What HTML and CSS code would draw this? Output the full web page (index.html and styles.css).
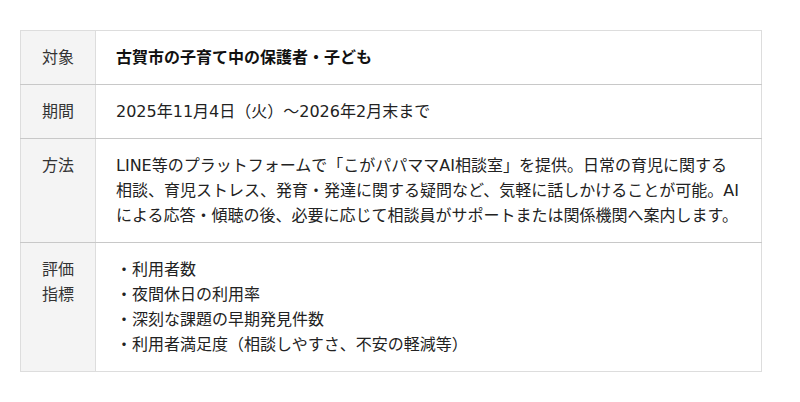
FILE: index.html
```html
<!DOCTYPE html>
<html lang="ja">
<head>
<meta charset="utf-8">
<link rel="stylesheet" href="styles.css">
</head>
<body>
<div class="wrap">
<table class="info">
  <tr>
    <th>対象</th>
    <td class="strong">古賀市の子育て中の保護者・子ども</td>
  </tr>
  <tr>
    <th>期間</th>
    <td>2025年11月4日（火）～2026年2月末まで</td>
  </tr>
  <tr>
    <th>方法</th>
    <td>LINE等のプラットフォームで「こがパパママAI相談室」を提供。日常の育児に関する相談、育児ストレス、発育・発達に関する疑問など、気軽に話しかけることが可能。AIによる応答・傾聴の後、必要に応じて相談員がサポートまたは関係機関へ案内します。</td>
  </tr>
  <tr>
    <th>評価<br>指標</th>
    <td>
      <ul class="list">
        <li>・利用者数</li>
        <li>・夜間休日の利用率</li>
        <li>・深刻な課題の早期発見件数</li>
        <li>・利用者満足度（相談しやすさ、不安の軽減等）</li>
      </ul>
    </td>
  </tr>
</table>
</div>
</body>
</html>
```

FILE: styles.css
```css
html, body {
  margin: 0;
  padding: 0;
  background: #fff;
}
body {
  font-family: "DejaVu Sans", "Noto Sans CJK JP", sans-serif;
  font-size: 16px;
  color: #222;
}
.wrap {
  padding: 30px 0 0 20px;
}
.info {
  width: 742px;
  border-collapse: collapse;
  border: 1px solid #ddd;
}
.info th,
.info td {
  line-height: 25px;
  padding: 14px 20px;
  border-top: 1px solid #c8c8c8;
  border-bottom: 1px solid #c8c8c8;
  vertical-align: top;
  text-align: left;
}
.info tr:first-child th,
.info tr:first-child td {
  border-top: 1px solid #ddd;
}
.info tr:last-child th,
.info tr:last-child td {
  border-bottom: 1px solid #ddd;
}
.info th {
  width: 34px;
  font-weight: normal;
  text-align: center;
  background: #f4f4f4;
  color: #333;
  border-right: 1px solid #ddd;
}
.info td.strong {
  font-weight: bold;
  color: #111;
}
.list {
  list-style: none;
  margin: 0;
  padding: 0;
}
```
